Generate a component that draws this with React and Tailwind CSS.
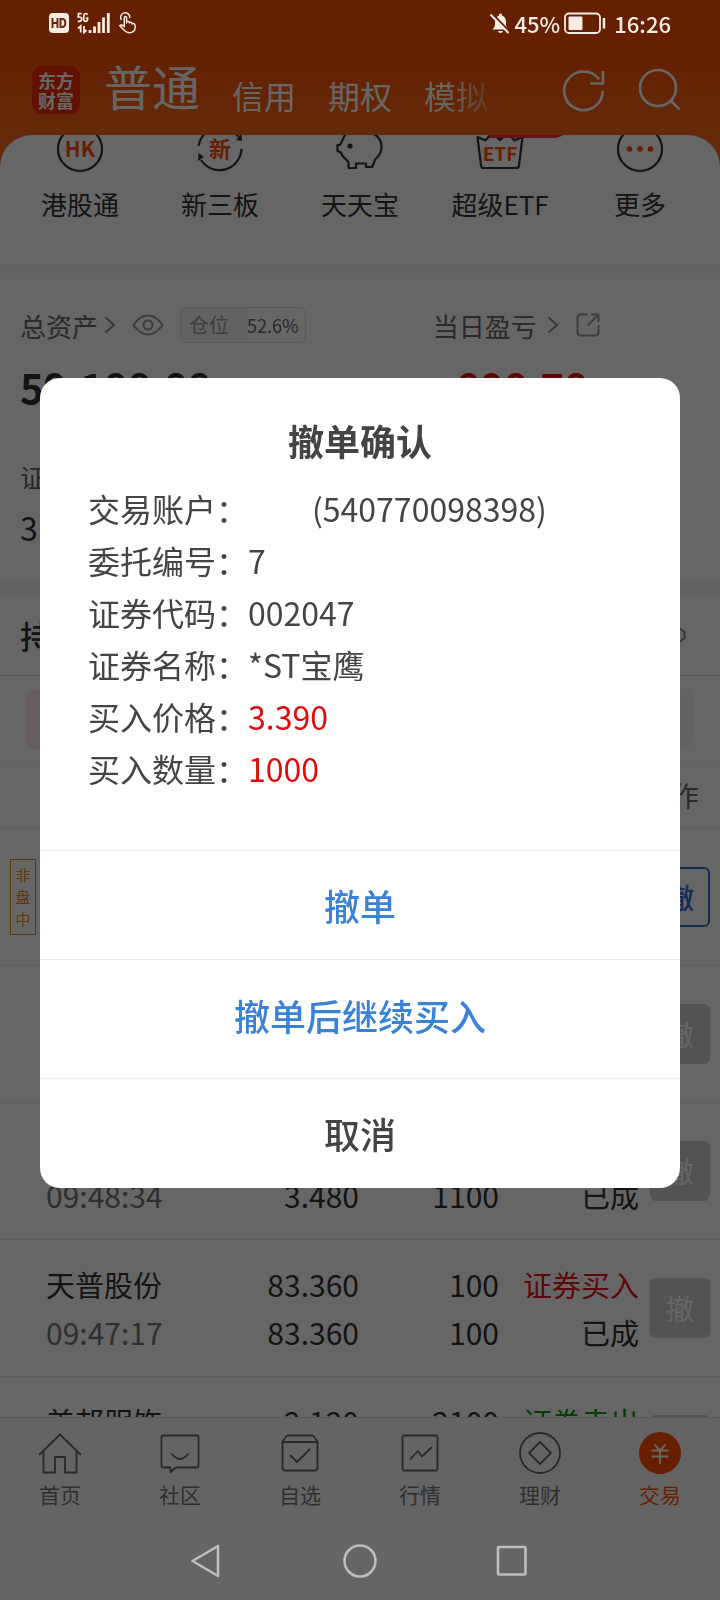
import React from "react";

const shortcuts = [
  { label: "港股通", icon: <HkIcon /> },
  { label: "新三板", icon: <NewBoardIcon /> },
  { label: "天天宝", icon: <PiggyIcon /> },
  { label: "超级ETF", icon: <EtfIcon />, badge: true },
  { label: "更多", icon: <MoreIcon /> },
];

const orders = [
  { intraday: true, active: true },
  {},
  { time: "09:48:34", deal: "3.480", filled: "1100", status: "已成" },
  {
    name: "天普股份",
    time: "09:47:17",
    price: "83.360",
    deal: "83.360",
    qty: "100",
    filled: "100",
    side: "证券买入",
    status: "已成",
  },
  { name: "美邦服饰", price: "2.120", qty: "2100", side: "证券卖出", sell: true },
];

const details = [
  ["委托编号", "7"],
  ["证券代码", "002047"],
  ["证券名称", "*ST宝鹰"],
  ["买入价格", "3.390", true],
  ["买入数量", "1000", true],
];

function HkIcon() {
  return (
    <svg viewBox="0 0 48 48" className="size-12" fill="none">
      <circle cx="24" cy="24" r="22" stroke="#333" strokeWidth="2.2" />
      <text x="24" y="31.500" textAnchor="middle" fontSize="21" fontWeight="700" fill="#ff5000">HK</text>
    </svg>
  );
}

function NewBoardIcon() {
  return (
    <svg viewBox="0 0 48 48" className="size-12" fill="none">
      <path d="M2.500 21A22 22 0 0 1 42 11.500M45.500 24A22 22 0 0 1 5 35" stroke="#333" strokeWidth="2.2" />
      <path d="M40 15l6 1-.5-8zM2 36l.5-8 5.500 4z" fill="#333" />
      <text x="24" y="32" textAnchor="middle" fontSize="22" fontWeight="700" fill="#ff5000">新</text>
    </svg>
  );
}

function PiggyIcon() {
  return (
    <svg viewBox="0 0 48 48" className="size-12" fill="none" stroke="#333" strokeWidth="2.2" strokeLinejoin="round">
      <path d="M9 10L7 5l8 4c4-1.500 9-1.500 17-1.500 8 .5 13.500 6.500 13.500 14.500 0 6-3 9.500-6 12l-3.500 8h-6v-3.500H20V43h-7.500v-6L6.500 31 5 27.500l-3.500-1.500v-6H4z" />
      <circle cx="14" cy="21" r="2.600" fill="#333" stroke="none" />
    </svg>
  );
}

function EtfIcon() {
  return (
    <svg viewBox="0 0 48 48" className="size-12" fill="none">
      <path d="M5 40.500L1.500 12l8 3.500L16 8l8 7 8-7 6.500 7.500 8-3.500L43 40.500q-.3 2.500-3 2.500H8q-2.700 0-3-2.500" stroke="#333" strokeWidth="2.200" strokeLinejoin="round" />
      <text x="24" y="36" textAnchor="middle" fontSize="19" fontWeight="700" fill="#ff5000">ETF</text>
    </svg>
  );
}

function MoreIcon() {
  return (
    <svg viewBox="0 0 48 48" className="size-12" fill="none">
      <circle cx="24" cy="24" r="22" stroke="#333" strokeWidth="2.2" />
      <g fill="#ff5000">
        <circle cx="13.500" cy="24" r="2.800" />
        <circle cx="24" cy="24" r="2.800" />
        <circle cx="34.500" cy="24" r="2.800" />
      </g>
    </svg>
  );
}

function Chevron() {
  return (
    <svg viewBox="0 0 12 18" className="h-[18px] w-3" fill="none" stroke="#8a8a8a" strokeWidth="2">
      <path d="M1.500 1.500l8.500 7.500-8.500 7.500" />
    </svg>
  );
}

function StatusBar() {
  return (
    <div className="relative z-20 flex h-[46px] items-center justify-between px-[49px] text-[22px] font-medium text-[#f5ece6]">
      <div className="flex items-center gap-2">
        <svg viewBox="0 0 20 20" className="size-5" role="img" aria-label="HD">
          <rect width="20" height="20" rx="4" fill="#f5ece6" />
          <path d="M3.500 5v10M8.500 5v10M3.500 10h5M11.500 5.900v8.200h1.500q3.300 0 3.300-4.100t-3.300-4.100z" fill="none" stroke="#652000" strokeWidth="1.900" />
        </svg>
        <svg viewBox="0 0 33 22" className="h-[22px] w-[33px]" fill="none" stroke="#f5ece6">
          <path d="M4.700 1.700H1.500L1.200 5h1.300q2.200 0 2.200 2t-2.200 2.300H.8M10.600 3q-.4-1.500-1.900-1.500-2 0-2 4t2 4q2 0 2-3.500H8.800" strokeWidth="1.700" />
          <path d="M3.700 20.500v-6.500L1 16.500M7 14v6.500l2.500-2.500" strokeWidth="1.800" />
          <path d="M13 18v3M17.500 14.500v6.500M22 10v11M26.500 5.500v15.500M31.300 1v20" strokeWidth="2.800" />
        </svg>
        <svg viewBox="0 0 20 24" className="h-[22px] w-[19px]" fill="none" stroke="#f5ece6" strokeWidth="1.600" strokeLinecap="round" strokeLinejoin="round">
          <path d="M3 8a5 5 0 1 1 9.500-2" />
          <path d="M6.500 16V6.500q0-1.500 1.300-1.500T9 6.500V12v-1.500q3-1 3 1.500v-.5q3-1 3 1.500v-.3q3.300-.7 3.300 2V17q0 5-5.300 5.500-4 .3-6-2L1.500 15q1.500-2 5 1" />
        </svg>
      </div>
      <div className="flex items-center gap-1">
        <svg viewBox="0 0 22 22" className="size-[22px]">
          <path d="M3.500 17.500q2.500-2 2.500-5V10q0-5 3.700-6.200Q10 1.500 11.500 1.500t1.800 2.300Q17 5 17 10v2.500q0 3 2.500 5z" fill="#f5ece6" />
          <path d="M9 19h5q-.5 2-2.500 2T9 19" fill="#f5ece6" />
          <path d="M2.500 1L21 20.500" stroke="#652000" strokeWidth="2.500" />
          <path d="M1.500 2.500L19.500 21" stroke="#f5ece6" strokeWidth="2" />
        </svg>
        <span>45%</span>
        <svg viewBox="0 0 42 22" className="h-[22px] w-[42px]" fill="none">
          <rect x="1" y="1.500" width="35" height="19.500" rx="4" stroke="#f5ece6" strokeWidth="1.800" />
          <rect x="4.500" y="4.500" width="14" height="13.500" rx="1" fill="#f5ece6" />
          <path d="M40 6v10.500" stroke="#f5ece6" strokeWidth="2.500" />
        </svg>
        <span className="ml-1">16:26</span>
      </div>
    </div>
  );
}

function Header() {
  return (
    <header className="flex h-[89px] items-start justify-between pr-[38px] pl-8 text-white">
      <div className="flex">
        <div className="mt-5 mr-6 grid size-12 place-content-center rounded-[10px] bg-[#f52a00] text-center text-[18px] leading-5 font-bold">
          <span>东方<br />财富</span>
        </div>
        <nav className="flex h-[72px] items-end gap-8 text-[32px] leading-[46px]">
          <button className="text-[48px] leading-[66px]">普通</button>
          <button>信用</button>
          <button>期权</button>
          <button className="bg-linear-to-r from-white from-40% to-white/30 bg-clip-text text-transparent">模拟</button>
        </nav>
      </div>
      <div className="mt-[22px] flex gap-8">
        <button aria-label="刷新">
          <svg viewBox="0 0 44 44" className="size-11" fill="none" stroke="currentColor" strokeWidth="2.700">
            <path d="M37 11.300A19.300 19.300 0 1 0 40.800 23M41 3v12.500H28" />
          </svg>
        </button>
        <button aria-label="搜索">
          <svg viewBox="0 0 44 44" className="size-11" fill="none" stroke="currentColor" strokeWidth="2.700">
            <circle cx="20" cy="20" r="18" />
            <path d="M32.500 32.500l9 9" />
          </svg>
        </button>
      </div>
    </header>
  );
}

function Assets() {
  return (
    <section className="grid grid-cols-[3fr_2fr] gap-x-3 border-t-16 border-[#f7f7f7] px-5 pt-[25px] pb-7 text-[26px] text-[#666]">
      <div>
        <div className="flex h-[42px] items-center">
          <span>总资产</span>
          <span className="ml-1.5"><Chevron /></span>
          <button aria-label="隐藏金额" className="ml-4">
            <svg viewBox="0 0 32 22" className="h-[22px] w-8" fill="none" stroke="#9a9a9a" strokeWidth="2">
              <path d="M1.500 11Q8 1.500 16 1.500T30.500 11Q24 20.500 16 20.500T1.500 11z" />
              <circle cx="16" cy="11" r="4.500" />
            </svg>
          </button>
          <div className="ml-4 flex h-9 items-center overflow-hidden rounded-md border border-[#dedede] text-lg">
            <span className="flex h-full w-[66px] items-center bg-[#f4f4f4] pl-2 text-xl text-[#999]">仓位</span>
            <span className="pr-1.5">52.6%</span>
          </div>
        </div>
        <div className="mt-[13px] h-14 text-[40px] leading-14 font-bold text-[#333]">59,188.88</div>
      </div>
      <div>
        <div className="flex h-[42px] items-center">
          <span>当日盈亏</span>
          <span className="ml-2.5"><Chevron /></span>
          <button aria-label="分享" className="ml-4">
            <svg viewBox="0 0 26 26" className="size-[26px]" fill="none" stroke="#9a9a9a" strokeWidth="2">
              <path d="M13 2.500H6Q2.500 2.500 2.500 6v14q0 3.500 3.500 3.500h14q3.500 0 3.500-3.500v-7M16 2.500h7.500V10M23 3L12.500 13.500" />
            </svg>
          </button>
        </div>
        <div className="mt-[13px] h-14 pl-6 text-[40px] leading-14 font-bold text-[#e60f0f]">898.78</div>
      </div>
      <div className="col-span-2 mt-11 leading-9">证券市值</div>
      <div className="col-span-2 mt-2 text-[32px] leading-12 text-[#333]">31,112</div>
    </section>
  );
}

function OrderRow({ order }) {
  return (
    <tr className="border-b border-[#ebebeb] align-top">
      <td className="pt-[30px] pl-[10px]">
        {order.intraday && (
          <span className="block w-[26px] border border-[#e88a10] py-1 text-center text-[15px] leading-[22px] text-[#e88a10]">
            非<br />盘<br />中
          </span>
        )}
      </td>
      <td className="h-[137px] pt-5 text-[29px]">
        <div className="h-12">{order.name}</div>
        <div className="h-12 text-[30px] text-[#777]">{order.time}</div>
      </td>
      <td className="pt-5 text-right">
        <div className="h-12">{order.price}</div>
        <div className="h-12">{order.deal}</div>
      </td>
      <td className="pt-5 text-right">
        <div className="h-12">{order.qty}</div>
        <div className="h-12">{order.filled}</div>
      </td>
      <td className="pt-5 text-right text-[29px]">
        <div className={order.sell ? "h-12 text-[#009a00]" : "h-12 text-[#e61414]"}>{order.side}</div>
        <div className="h-12">{order.status}</div>
      </td>
      <td className="pt-[38px] pr-[10px]">
        <button
          disabled={!order.active}
          className={
            order.active
              ? "ml-auto block size-[60px] rounded-md border-2 border-[#2f6fd0] text-[28px] font-medium text-[#2f6fd0]"
              : "ml-auto block size-[60px] rounded-md bg-[#cfcfcf] text-[28px] text-white"
          }
        >
          撤
        </button>
      </td>
    </tr>
  );
}

function Orders() {
  return (
    <section className="border-t-15 border-[#f7f7f7]">
      <div className="flex h-[82px] items-center justify-between border-b border-[#e0e0e0] pr-[34px] pl-5 text-[32px] font-medium text-[#333]">
        <h2>持仓</h2>
        <button aria-label="设置">
          <svg viewBox="0 0 28 28" className="size-7" fill="none" stroke="#888" strokeWidth="2" strokeLinejoin="round">
            <path d="M10.500 1.500h7L20 6l6.500 5v6L20 22l-2.500 4.500h-7L8 22l-6.500-5v-6L8 6z" />
            <circle cx="14" cy="14" r="4" />
          </svg>
        </button>
      </div>
      <div className="flex h-[87px] items-center gap-4 border-b border-[#f2f2f2] px-[26px]">
        <button aria-label="当日委托" className="h-15 flex-1 rounded-lg bg-[#ffebe6]" />
        <button aria-label="历史委托" className="h-15 flex-1 rounded-lg bg-[#f8f8f8]" />
      </div>
      <table className="w-full table-fixed text-[30px] leading-12 text-[#333]">
        <colgroup>
          <col className="w-[46px]" />
          <col className="w-[23%]" />
          <col />
          <col className="w-[140px]" />
          <col className="w-[140px]" />
          <col className="w-[81px]" />
        </colgroup>
        <thead>
          <tr className="h-[65px] border-b border-[#ebebeb] text-[28px] text-[#666]">
            <th colSpan={6} scope="col" className="pr-[21px] text-right font-normal">操作</th>
          </tr>
        </thead>
        <tbody>
          {orders.map((order, i) => (
            <OrderRow key={i} order={order} />
          ))}
        </tbody>
      </table>
    </section>
  );
}

const tabs = [
  {
    label: "首页",
    icon: <path d="M1 23L22 2.500 43 23M5.500 19v21.500H17V25h10v15.500h11.500V19" />,
  },
  {
    label: "社区",
    icon: (
      <>
        <path d="M5 3.500h34q1.500 0 1.500 1.500v29q0 1.500-1.500 1.500H18L12.500 40v-4.500H5q-1.500 0-1.500-1.500V5q0-1.500 1.500-1.500z" />
        <path d="M13.500 21.500q8.500 11 17 0" />
      </>
    ),
  },
  {
    label: "自选",
    icon: (
      <>
        <path d="M4.500 9.500l4.500-6h26l4.500 6V36q0 2.500-2.500 2.500H7q-2.500 0-2.500-2.500zM12 23l7 7 13-13" />
        <path d="M4.500 10h35" />
      </>
    ),
  },
  {
    label: "行情",
    icon: (
      <>
        <rect x="4.500" y="3.500" width="35" height="35" rx="1.500" />
        <path d="M12 27.500l8-8.500 4 5.500L34 15" />
      </>
    ),
  },
  {
    label: "理财",
    icon: (
      <>
        <circle cx="22" cy="21" r="20" />
        <path d="M22 10l11 11-11 11-11-11z" />
      </>
    ),
  },
  {
    label: "交易",
    active: true,
    icon: (
      <>
        <circle cx="22" cy="21" r="21" fill="#ff5000" stroke="none" />
        <path d="M16.500 12.500l5.500 6 5.500-6M13.500 18.500h17M13.500 24.500h17M22 18.500V32" stroke="#fff" strokeWidth="1.900" />
      </>
    ),
  },
];

function TabBar() {
  return (
    <nav className="grid h-[104px] shrink-0 grid-cols-6 border-t border-[#e0e0e0] bg-[#f9f9f9] pt-[14px] text-[21px] leading-8 text-[#777]">
      {tabs.map((tab) => (
        <a key={tab.label} href="#" className={tab.active ? "flex flex-col items-center text-[#ff5000]" : "flex flex-col items-center"}>
          <svg viewBox="0 0 44 44" className="size-11" fill="none" stroke="#666" strokeWidth="1.800" strokeLinejoin="round">
            {tab.icon}
          </svg>
          <span className="mt-0.5">{tab.label}</span>
        </a>
      ))}
    </nav>
  );
}

function SystemNav() {
  return (
    <div className="bg-[#fdfdfd]">
      <div className="relative z-20 flex h-[79px] items-center justify-center gap-[118px] text-[#bdbdbd]">
        <button aria-label="返回">
          <svg viewBox="0 0 34 34" className="size-[34px]" fill="none" stroke="currentColor" strokeWidth="2.600" strokeLinejoin="round">
            <path d="M27 2v30L1.500 17z" />
          </svg>
        </button>
        <button aria-label="主屏幕">
          <svg viewBox="0 0 34 34" className="size-[34px]" fill="none" stroke="currentColor" strokeWidth="2.600">
            <circle cx="17" cy="17" r="15.500" />
          </svg>
        </button>
        <button aria-label="最近任务">
          <svg viewBox="0 0 34 34" className="size-[34px]" fill="none" stroke="currentColor" strokeWidth="2.600">
            <rect x="3" y="3" width="27.500" height="27.500" rx="1" />
          </svg>
        </button>
      </div>
    </div>
  );
}

function ConfirmDialog() {
  return (
    <div className="fixed inset-0 z-10 flex items-center bg-black/60 px-10 pb-[35px]">
      <div role="dialog" aria-modal="true" aria-labelledby="dialog-title" className="w-full overflow-hidden rounded-[20px] bg-white text-[32px] leading-[52px] text-[#444]">
        <div className="px-12 pt-9 pb-14">
          <h1 id="dialog-title" className="text-center text-4xl leading-[52px] font-bold">撤单确认</h1>
          <dl className="mt-4">
            <div className="flex">
              <dt>交易账户：</dt>
              <dd className="pl-16">(540770098398)</dd>
            </div>
            {details.map(([label, value, red]) => (
              <div key={label} className="flex">
                <dt>{label}：</dt>
                <dd className={red ? "text-[#e00c0c]" : ""}>{value}</dd>
              </div>
            ))}
          </dl>
        </div>
        <div className="flex flex-col text-4xl font-medium text-[#3a82d8]">
          <button className="h-[109px] border-t border-[#ebebeb]">撤单</button>
          <button className="h-[119px] border-t border-[#ebebeb] pb-2">撤单后继续买入</button>
          <button className="h-[110px] border-t border-[#ebebeb] text-[#444]">取消</button>
        </div>
      </div>
    </div>
  );
}

export default function App() {
  return (
    <div lang="zh-CN" className="flex h-screen flex-col overflow-hidden bg-linear-to-b from-[#fa5000] from-3% to-[#fa6a19] to-9% font-['Noto_Sans_CJK_SC',sans-serif]">
      <StatusBar />
      <Header />
      <main className="min-h-0 flex-1 overflow-hidden rounded-t-[32px] bg-white">
        <div className="-mt-[10px] grid h-[138px] grid-cols-5 px-[10px] text-[26px] leading-[38px] text-[#333]">
          {shortcuts.map((item) => (
            <a key={item.label} href="#" className="relative flex flex-col items-center">
              {item.icon}
              <span className="mt-3">{item.label}</span>
              {item.badge && <i className="absolute top-0 left-[60px] h-[13px] w-[77px] rounded-br-xl bg-[#f5323c]" />}
            </a>
          ))}
        </div>
        <Assets />
        <Orders />
      </main>
      <TabBar />
      <SystemNav />
      <ConfirmDialog />
    </div>
  );
}
